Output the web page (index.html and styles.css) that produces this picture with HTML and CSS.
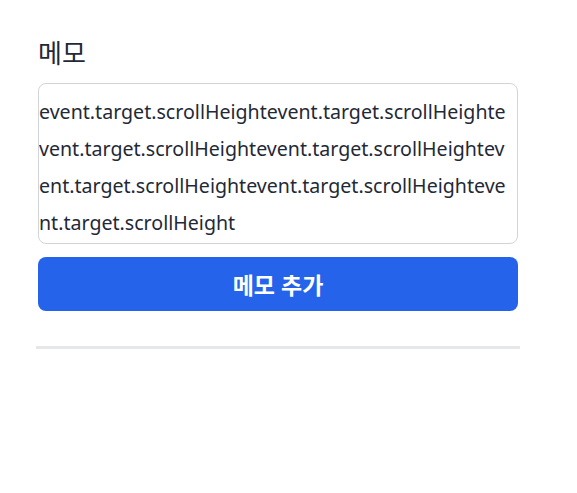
FILE: index.html
```html
<html>

<head>
    <title>메모</title>
    <link rel="stylesheet" href="styles.css">
</head>

<body>
	<div class="memo-form">
		<label class="memo-label" for="memo">메모</label>
		<textarea id="memo" class="memo-input">event.target.scrollHeightevent.target.scrollHeightevent.target.scrollHeightevent.target.scrollHeightevent.target.scrollHeightevent.target.scrollHeightevent.target.scrollHeight</textarea>
		<button class="memo-add">메모 추가</button>
	</div>
	<div class="divider"></div>
</body>

</html>
```

FILE: styles.css
```css
body {
	margin: 0;
	padding: 38px 59px 0 38px;
	font-family: "Noto Sans", "Noto Sans CJK KR", sans-serif;
	color: #1f2937;
	background-color: white;
}

.memo-form {
	display: flex;
	flex-direction: column;
}

.memo-label {
	font-size: 26px;
	line-height: 30px;
	margin-bottom: 15px;
}

.memo-input {
	box-sizing: border-box;
	height: 161px;
	padding: 9px 8px 0 0;
	border: 1px solid #d1d5db;
	border-radius: 8px;
	font-family: inherit;
	font-size: 19.6px;
	line-height: 37px;
	color: #1f2937;
	resize: none;
	overflow: hidden;
	word-break: break-all;
}

.memo-add {
	margin-top: 13px;
	height: 54px;
	border: none;
	border-radius: 8px;
	background-color: #2563eb;
	color: white;
	font-family: inherit;
	font-size: 23px;
	font-weight: 700;
}

.divider {
	height: 3px;
	margin: 35px -2px 0 -2px;
	background-color: #e5e7eb;
}
```
